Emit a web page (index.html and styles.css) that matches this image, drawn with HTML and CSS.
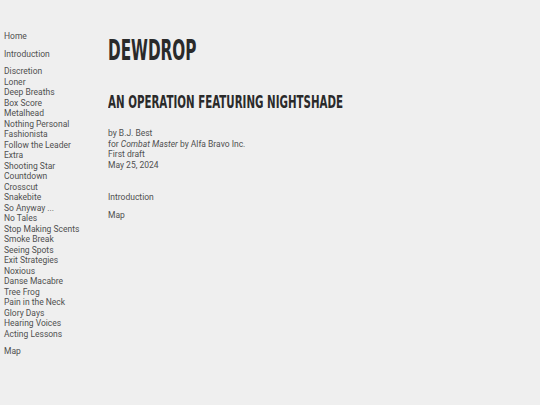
FILE: index.html
```html
<!DOCTYPE html>
<html>
<head>
<meta charset="utf-8">
<link rel="stylesheet" href="styles.css">
</head>
<body>
<div class="page">
  <nav class="side">
    <div class="group"><a>Home</a></div>
    <div class="group"><a>Introduction</a></div>
    <div class="group">
      <a>Discretion</a>
      <a>Loner</a>
      <a>Deep Breaths</a>
      <a>Box Score</a>
      <a>Metalhead</a>
      <a>Nothing Personal</a>
      <a>Fashionista</a>
      <a>Follow the Leader</a>
      <a>Extra</a>
      <a>Shooting Star</a>
      <a>Countdown</a>
      <a>Crosscut</a>
      <a>Snakebite</a>
      <a>So Anyway ...</a>
      <a>No Tales</a>
      <a>Stop Making Scents</a>
      <a>Smoke Break</a>
      <a>Seeing Spots</a>
      <a>Exit Strategies</a>
      <a>Noxious</a>
      <a>Danse Macabre</a>
      <a>Tree Frog</a>
      <a>Pain in the Neck</a>
      <a>Glory Days</a>
      <a>Hearing Voices</a>
      <a>Acting Lessons</a>
    </div>
    <div class="group"><a>Map</a></div>
  </nav>
  <main class="main">
    <h1 class="title">Dewdrop</h1>
    <h2 class="subtitle">An Operation Featuring Nightshade</h2>
    <div class="meta">
      <p>by B.J. Best</p>
      <p>for <em>Combat Master</em> by Alfa Bravo Inc.</p>
      <p>First draft</p>
      <p>May 25, 2024</p>
    </div>
    <div class="links">
      <a>Introduction</a>
      <a>Map</a>
    </div>
  </main>
</div>
</body>
</html>
```
FILE: styles.css
```css
html, body {
  margin: 0;
  padding: 0;
  background: #efefef;
}
body {
  font-family: Roboto, "Liberation Sans", sans-serif;
  font-size: 8.5px;
  color: #505050;
}
.page {
  display: flex;
  padding: 31px 0 0 4px;
}
.side {
  width: 104px;
  flex-shrink: 0;
  display: flex;
  flex-direction: column;
  gap: 7px;
}
.group {
  display: flex;
  flex-direction: column;
  line-height: 10.5px;
}
.group a {
  display: block;
}
.main {
  display: flex;
  flex-direction: column;
}
.title,
.subtitle {
  margin: 0;
  font-family: "DejaVu Sans Condensed", "DejaVu Sans", sans-serif;
  font-weight: bold;
  text-transform: uppercase;
  color: #2a2a2a;
  transform-origin: left;
  white-space: nowrap;
}
.title {
  font-size: 29px;
  line-height: 38px;
  transform: scaleX(0.585);
}
.subtitle {
  margin-top: 21px;
  font-size: 18px;
  line-height: 24px;
  transform: scaleX(0.635);
}
.meta {
  margin-top: 14px;
  line-height: 10.5px;
}
.meta p {
  margin: 0;
}
.links {
  margin-top: 22px;
  display: flex;
  flex-direction: column;
  gap: 7.5px;
  line-height: 10.5px;
}
```
